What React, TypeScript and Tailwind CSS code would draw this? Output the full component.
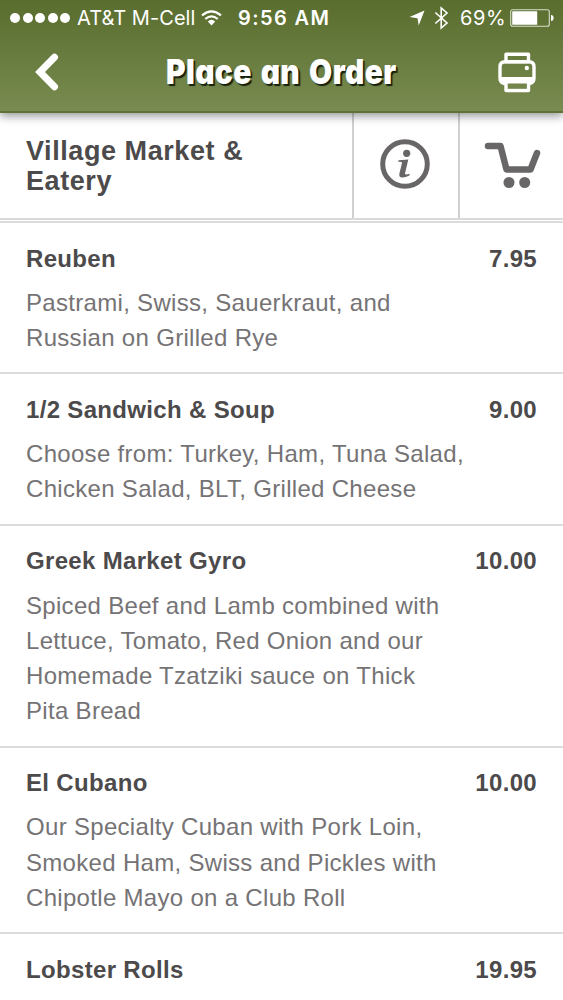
import React from "react";

type Item = { name: string; price: string; lines: string[] };

const items: Item[] = [
  { name: "Reuben", price: "7.95", lines: ["Pastrami, Swiss, Sauerkraut, and", "Russian on Grilled Rye"] },
  { name: "1/2 Sandwich & Soup", price: "9.00", lines: ["Choose from: Turkey, Ham, Tuna Salad,", "Chicken Salad, BLT, Grilled Cheese"] },
  {
    name: "Greek Market Gyro",
    price: "10.00",
    lines: ["Spiced Beef and Lamb combined with", "Lettuce, Tomato, Red Onion and our", "Homemade Tzatziki sauce on Thick", "Pita Bread"],
  },
  {
    name: "El Cubano",
    price: "10.00",
    lines: ["Our Specialty Cuban with Pork Loin,", "Smoked Ham, Swiss and Pickles with", "Chipotle Mayo on a Club Roll"],
  },
  { name: "Lobster Rolls", price: "19.95", lines: [] },
];

function StatusBar() {
  return (
    <div className="flex h-9 items-center pl-[10px] font-['Inter',sans-serif] text-[20px] text-white">
      <div className="flex w-[62px] gap-[2.5px]">
        {[0, 1, 2, 3, 4].map((i) => (
          <span key={i} className="size-[10px] rounded-full bg-white" />
        ))}
      </div>
      <span className="ml-[5px] w-[120px] whitespace-nowrap tracking-[0.05px]">AT&amp;T M-Cell</span>
      <svg className="ml-[4px] h-[16px] w-[21px]" viewBox="0 0 21 16" fill="none" stroke="#fff" strokeWidth="2.2">
        <path d="M1 5.3Q10.5-2.7 20 5.3M4.3 9Q10.5 3.8 16.7 9" />
        <path d="M6.8 11.5Q10.5 8.2 14.2 11.5L10.5 15.6Z" fill="#fff" stroke="none" />
      </svg>
      <span className="ml-[16px] w-[94px] whitespace-nowrap font-semibold tracking-[1.4px]">9:56 AM</span>
      <svg className="ml-[77px] h-[16px] w-[16px]" viewBox="0 0 16 16" fill="#fff">
        <path d="M15.5.5 9.7 15.5 8.5 8.2.5 7Z" />
      </svg>
      <svg className="ml-[9px] h-[24px] w-[15px]" viewBox="0 0 15 24" fill="none" stroke="#fff" strokeWidth="1.6">
        <path d="M1.3 6.5 13 17 7.2 22V2L13 7 1.3 17.5" />
      </svg>
      <span className="ml-[11px] w-[45px] whitespace-nowrap tracking-[0.6px]">69%</span>
      <svg className="ml-[5px] h-[18px] w-[44px]" viewBox="0 0 44 18">
        <rect x=".7" y=".7" width="38.6" height="16.6" rx="2" fill="none" stroke="#d7dec9" strokeWidth="1.1" />
        <rect x="2.2" y="2.2" width="25" height="13.6" rx=".6" fill="#fff" />
        <path d="M41 6q2.6 0 2.6 3T41 12Z" fill="#fff" />
      </svg>
    </div>
  );
}

function Header() {
  return (
    <header className="relative z-10 h-[113px] shrink-0 border-b-2 border-[#617238] bg-linear-to-b from-[#596d2e] to-[#798b50] shadow-[0_3px_9px_rgba(0,0,0,0.42)]">
      <StatusBar />
      <div className="flex h-[72px] items-center pl-[35px] pr-[27px]">
        <svg className="h-[38px] w-[25px]" viewBox="0 0 25 38" fill="none" stroke="#fff" strokeWidth="7">
          <path d="M19.5 4.3 5 19 19.5 33.7" strokeLinejoin="miter" strokeLinecap="round" />
        </svg>
        <h1 className="ml-[106px] w-[233px] origin-left scale-x-[0.88] whitespace-nowrap font-['Inter',sans-serif] text-[34px] leading-[40px] font-black tracking-[0.4px] text-white [font-feature-settings:'cv11'] [text-shadow:2px_2px_1px_#17200c] [word-spacing:3px]">
          Place an Order
        </h1>
        <svg className="ml-auto h-[41px] w-[38px]" viewBox="0 0 38 41" fill="none" stroke="#fff" strokeWidth="3.4">
          <path d="M8 9.5V2.2h22.5v7.3" strokeLinejoin="round" />
          <path d="M7 9.7H31" />
          <path d="M7.5 31.5H6.3Q2 30.5 2 26V14.8Q2 9.7 7.2 9.7h23.6q5.2 0 5.2 5.1V26q0 4.5-4.3 5.5h-1.2" />
          <path d="M3 25h32v2.5q0 4-4 4H7q-4 0-4-4Z" fill="#fff" stroke="none" />
          <path d="M8 29v9.5h22.5V29" strokeLinejoin="round" />
          <path d="M10 34.3h18.5" stroke="#74864b" strokeWidth="4" />
          <circle cx="28.8" cy="16" r="2.2" fill="#fff" stroke="none" />
        </svg>
      </div>
    </header>
  );
}

function InfoIcon() {
  return (
    <svg className="h-[50px] w-[50px]" viewBox="0 0 50 50" fill="#696667">
      <circle cx="25" cy="25" r="22.3" fill="none" stroke="#696667" strokeWidth="5" />
      <circle cx="26.7" cy="14.3" r="3.6" />
      <path d="M18.5 21.2 28.3 20.6 25 34.5Q25 36.3 29.6 34.8L29.4 36.6Q24 39.2 20.7 38.2 18.7 37.4 19.5 34L22 24Q22.3 22.5 18.3 22.9Z" />
    </svg>
  );
}

function CartIcon() {
  return (
    <svg className="h-[49px] w-[57px]" viewBox="0 0 57 49" fill="none" stroke="#696667" strokeLinecap="round" strokeLinejoin="round">
      <path d="M4 5H16.5L22.5 28.5H46.5L53 12" strokeWidth="6.5" />
      <circle cx="25" cy="41.5" r="5.5" fill="#696667" stroke="none" />
      <circle cx="40.7" cy="41.5" r="5.5" fill="#696667" stroke="none" />
    </svg>
  );
}

export default function App() {
  return (
    <div className="flex h-[1000px] w-[563px] flex-col overflow-hidden bg-white font-['Liberation_Sans',Arial,sans-serif] text-[#4c4a4b]">
      <Header />
      <section className="flex h-[107px] shrink-0 border-b-2 border-[#dad9da]">
        <h2 className="w-[352px] pt-[23px] pl-[26px] text-[27px] leading-[30px] font-bold tracking-[0.57px]">
          Village Market &amp;
          <br />
          Eatery
        </h2>
        <div className="flex w-[106px] border-l-2 border-[#d0cfd1] pt-[26px] pl-[26px]">
          <InfoIcon />
        </div>
        <div className="flex w-[105px] border-l-2 border-[#d0cfd1] pt-[28px] pl-[24px]">
          <CartIcon />
        </div>
      </section>
      <main className="mt-px">
        {items.map((item) => (
          <article key={item.name} className="border-t-2 border-[#dddcdd] px-[26px] pt-[20.5px] pb-[17.2px]">
            <div className="flex justify-between text-[24px] leading-[30px] font-bold tracking-[0.33px]">
              <h3>{item.name}</h3>
              <span>{item.price}</span>
            </div>
            <div className="mt-[11.3px] text-[24px] leading-[35.2px] tracking-[0.31px] whitespace-nowrap text-[#757375]">
              {item.lines.map((line) => (
                <p key={line}>{line}</p>
              ))}
            </div>
          </article>
        ))}
      </main>
    </div>
  );
}
